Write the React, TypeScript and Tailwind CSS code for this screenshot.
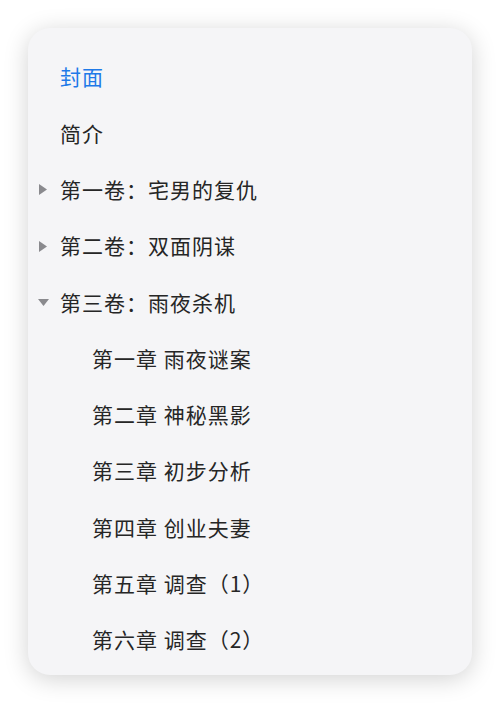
import React from "react";

type Item = {
  title: string;
  color?: string;
  indent?: boolean;
  arrow?: "right" | "down";
};

const items: Item[] = [
  { title: "封面", color: "text-[#1f7ae8]" },
  { title: "简介" },
  { title: "第一卷：宅男的复仇", arrow: "right" },
  { title: "第二卷：双面阴谋", arrow: "right" },
  { title: "第三卷：雨夜杀机", arrow: "down" },
  { title: "第一章 雨夜谜案", indent: true },
  { title: "第二章 神秘黑影", indent: true },
  { title: "第三章 初步分析", indent: true },
  { title: "第四章 创业夫妻", indent: true },
  { title: "第五章 调查（1）", indent: true },
  { title: "第六章 调查（2）", indent: true },
];

function Arrow({ dir }: { dir: "right" | "down" }) {
  if (dir === "right") {
    return (
      <svg width="8" height="11" viewBox="0 0 8 11" className="text-[#8a8a8e]">
        <path d="M0 0 L8 5.5 L0 11 Z" fill="currentColor" />
      </svg>
    );
  }
  return (
    <svg width="11" height="7" viewBox="0 0 11 7" className="text-[#8a8a8e]">
      <path d="M0 0 L11 0 L5.5 7 Z" fill="currentColor" />
    </svg>
  );
}

export default function App() {
  return (
    <div
      className="w-[500px] h-[704px] bg-white pt-[28px] pl-[28px]"
      style={{ fontFamily: '"Noto Sans CJK SC", "Noto Sans", sans-serif' }}
    >
      <div className="w-[444px] h-[647px] rounded-[22px] bg-[#f5f5f7] shadow-[0_4px_24px_rgba(0,0,0,0.18)] pt-[21px] overflow-hidden">
        {items.map((item) => (
          <div key={item.title} className="relative h-[56.3px] flex items-center">
            {item.arrow && (
              <div className="absolute left-[9px] top-0 h-full flex items-center w-[12px] justify-center">
                <Arrow dir={item.arrow} />
              </div>
            )}
            <span
              className={`text-[21px] tracking-[1px] ${item.indent ? "pl-[64px]" : "pl-[32px]"} ${
                item.color ?? "text-[#262626]"
              }`}
            >
              {item.title}
            </span>
          </div>
        ))}
      </div>
    </div>
  );
}
